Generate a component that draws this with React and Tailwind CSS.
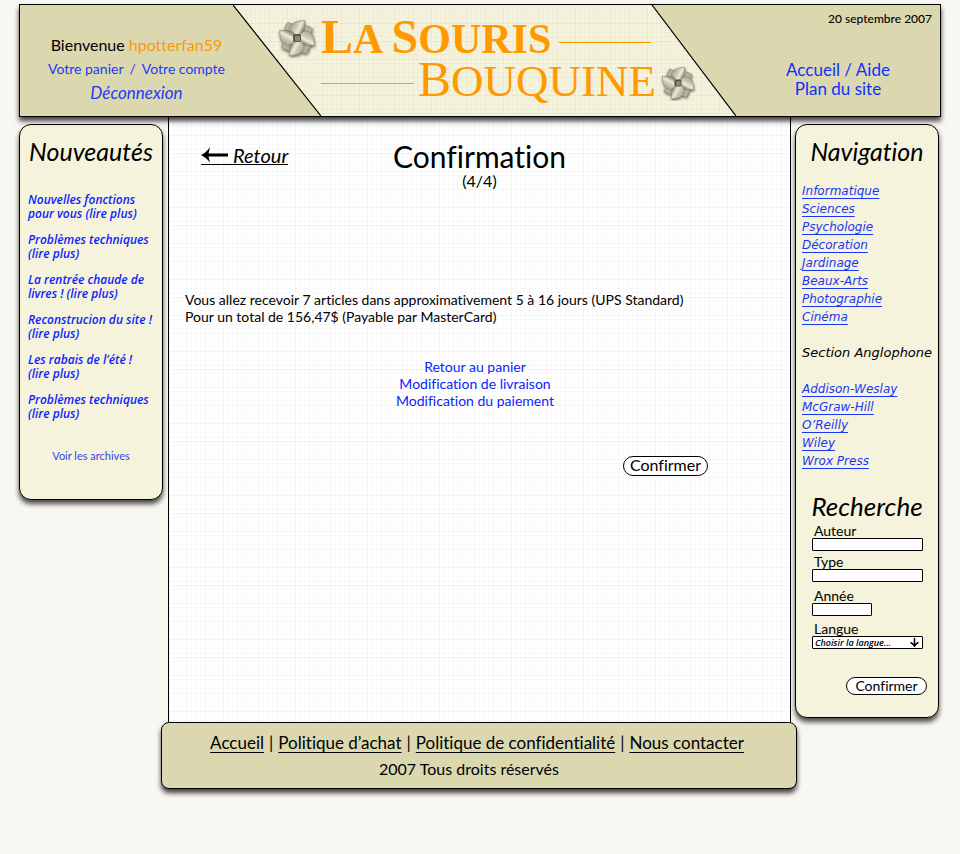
import React from "react";

const newsItems = [
  ["Nouvelles fonctions", "pour vous (lire plus)"],
  ["Problèmes techniques", "(lire plus)"],
  ["La rentrée chaude de", "livres ! (lire plus)"],
  ["Reconstrucion du site !", "(lire plus)"],
  ["Les rabais de l’été !", "(lire plus)"],
  ["Problèmes techniques", "(lire plus)"],
];

const subjects = [
  "Informatique",
  "Sciences",
  "Psychologie",
  "Décoration",
  "Jardinage",
  "Beaux-Arts",
  "Photographie",
  "Cinéma",
];

const publishers = ["Addison-Weslay", "McGraw-Hill", "O’Reilly", "Wiley", "Wrox Press"];

const footerLinks = ["Accueil", "Politique d’achat", "Politique de confidentialité", "Nous contacter"];

const graphPaper =
  "bg-[linear-gradient(rgba(0,0,0,0.04)_0_1px,transparent_1px_4px,rgba(0,0,0,0.02)_4px_5px,transparent_5px_9px,rgba(0,0,0,0.02)_9px_10px,transparent_10px_13px,rgba(0,0,0,0.02)_13px_14px,transparent_14px),linear-gradient(90deg,rgba(0,0,0,0.03)_0_1px,transparent_1px_4px,rgba(0,0,0,0.02)_4px_5px,transparent_5px_9px,rgba(0,0,0,0.02)_9px_10px,transparent_10px_13px,rgba(0,0,0,0.02)_13px_14px,transparent_14px)] bg-[size:18px_18px]";

const panel =
  "w-36 flex-none rounded-xl border border-black bg-[#f5f3dc] shadow-[0_4px_5px_rgba(0,0,0,0.7)]";

const field = "block h-[13px] rounded-[1px] border border-black bg-white px-1 text-[9px] outline-none";

function Flower({ className, id }) {
  const angles = [0, 90, 180, 270];
  return (
    <svg viewBox="-20 -20 40 40" className={className} aria-hidden="true">
      <defs>
        <linearGradient id={id} x1="0" y1="0" x2="1" y2="0.4">
          <stop offset="0" stopColor="#96947f" />
          <stop offset="0.5" stopColor="#c9c7b4" />
          <stop offset="0.75" stopColor="#eceadb" />
          <stop offset="1" stopColor="#8b8977" />
        </linearGradient>
        <filter id={id + "s"} x="-30%" y="-30%" width="160%" height="160%">
          <feDropShadow dx="0.5" dy="1.5" stdDeviation="1.4" floodColor="#000" floodOpacity="0.6" />
        </filter>
      </defs>
      <g filter={"url(#" + id + "s)"}>
        {angles.map((a) => (
          <path
            key={"b" + a}
            transform={"rotate(" + (a - 36) + ")"}
            d="M-6 -3C-10 -8 -8 -15 2 -18C3 -14 9 -11 6 -3Z"
            fill="#b4b29f"
            stroke="#84826f"
            strokeWidth="0.6"
          />
        ))}
        {angles.map((a) => (
          <path
            key={"f" + a}
            transform={"rotate(" + (a + 6) + ")"}
            d="M-4 -3C-12 -8 -8 -17 6 -18C4 -14 10 -9 4 -3Z"
            fill={"url(#" + id + ")"}
            stroke="#84826f"
            strokeWidth="0.6"
          />
        ))}
        <rect x="-4" y="-4" width="8" height="8" rx="2" fill="#57564a" />
        <rect x="-2" y="-2" width="5" height="5" rx="1" fill="#8d8b76" />
      </g>
    </svg>
  );
}

function Header() {
  return (
    <header className="relative z-10 mx-[19px] flex h-[113px] border border-black bg-[#dbd8b0] shadow-[0_4px_5px_rgba(0,0,0,0.75)]">
      <div className="flex flex-1 flex-col items-center pt-7 pl-5 whitespace-nowrap text-[#1f39f5]">
        <p className="text-[16px] leading-6 text-black">
          Bienvenue <span className="text-[#ff9900]">hpotterfan59</span>
        </p>
        <p className="text-[14px] leading-6">
          <a href="#panier">Votre panier</a>
          <span className="mx-[6px]">/</span>
          <a href="#compte">Votre compte</a>
        </p>
        <a href="#deconnexion" className="text-[17px] leading-6 italic">
          Déconnexion
        </a>
      </div>

      <div className="relative w-[503px] flex-none">
        <div className="absolute inset-0 bg-[#f5f3dc] [clip-path:polygon(0_0,419px_0,503px_100%,88px_100%)]">
          <div className={"h-full " + graphPaper} />
        </div>
        <svg
          className="absolute inset-0 h-full w-full"
          viewBox="0 0 503 111"
          preserveAspectRatio="none"
          aria-hidden="true"
        >
          <path d="M0 0L88 111M419 0L503 111" stroke="#000" strokeWidth="1.2" fill="none" />
        </svg>
        <h1 className="relative pt-[11px] font-['Liberation_Serif',serif] whitespace-nowrap text-[#ff9900]">
          <span className="flex h-[43px] items-center pr-[85px] pl-11">
            <Flower id="petalA" className="mr-1 h-10 w-10 flex-none" />
            <span className="text-[42px] leading-[43px] font-bold">
              <span className="text-[48px]">L</span>A <span className="text-[48px]">S</span>OURIS
            </span>
            <span className="mt-[10px] ml-2 h-px flex-1 bg-[#ff9900]" />
          </span>
          <span className="flex h-[43px] items-center pr-10 pl-[88px]">
            <span className="mt-[6px] mr-1 h-px flex-1 bg-[#ff9900]" />
            <span className="text-[45px] leading-[43px]">
              <span className="text-[50px]">B</span>OUQUINE
            </span>
            <Flower id="petalB" className="mt-1 ml-1 h-9 w-9 flex-none" />
          </span>
        </h1>
      </div>

      <div className="flex w-[204px] flex-none flex-col">
        <time dateTime="2007-09-20" className="pt-1 pr-2 text-right text-[12px] leading-5 font-medium">
          20 septembre 2007
        </time>
        <div className="pt-[31px] text-center text-[17px] leading-[19px] text-[#1030fa]">
          <p>
            <a href="#accueil">Accueil</a> / <a href="#aide">Aide</a>
          </p>
          <a href="#plan">Plan du site</a>
        </div>
      </div>
    </header>
  );
}

function News() {
  return (
    <aside className={panel + " mt-[7px] pb-9"}>
      <h2 className="pt-[10px] text-center text-[25px] leading-8 italic">Nouveautés</h2>
      <ul className="mt-[26px] space-y-3 pl-2 font-['Open_Sans',sans-serif] text-[12px] leading-[14px] font-semibold whitespace-nowrap text-[#0b24fb] italic">
        {newsItems.map(([first, second], i) => (
          <li key={i}>
            <a href="#nouveaute">
              {first}
              <br />
              {second}
            </a>
          </li>
        ))}
      </ul>
      <a href="#archives" className="mt-7 block text-center text-[11px] leading-[14px] text-[#2f45ee]">
        Voir les archives
      </a>
    </aside>
  );
}

function LinkList({ items }) {
  return (
    <ul className="text-[#1a36f5]">
      {items.map((item) => (
        <li key={item}>
          <a href="#rayon" className="underline decoration-1 underline-offset-3 [text-decoration-skip-ink:none]">
            {item}
          </a>
        </li>
      ))}
    </ul>
  );
}

function Sidebar() {
  return (
    <aside className={panel + " mt-[7px] pb-[22px]"}>
      <h2 className="pt-[10px] text-center text-[25px] leading-8 italic">Navigation</h2>
      <nav className="mt-[15px] pl-[6px] font-['DejaVu_Sans',sans-serif] text-[12px] leading-[18px] whitespace-nowrap italic">
        <LinkList items={subjects} />
        <p className="py-[18px] text-[13px]">Section Anglophone</p>
        <LinkList items={publishers} />
      </nav>
      <h2 className="mt-5 text-center text-[26px] leading-8 italic">Recherche</h2>
      <form className="pl-4 text-[14px]" onSubmit={(e) => e.preventDefault()}>
        <label htmlFor="auteur" className="mt-[2px] block h-[14px] pl-[2px] leading-[14px]">
          Auteur
        </label>
        <input id="auteur" type="text" className={field + " w-[111px]"} />
        <label htmlFor="type" className="mt-1 block h-[14px] pl-[2px] leading-[14px]">
          Type
        </label>
        <input id="type" type="text" className={field + " w-[111px]"} />
        <label htmlFor="annee" className="mt-[7px] block h-[14px] pl-[2px] leading-[14px]">
          Année
        </label>
        <input id="annee" type="text" className={field + " w-[60px]"} />
        <label htmlFor="langue" className="mt-[6px] block h-[14px] pl-[2px] leading-[14px]">
          Langue
        </label>
        <div className="relative w-[111px]">
          <select
            id="langue"
            className="block h-[13px] w-full appearance-none rounded-[1px] border border-black bg-white pl-[2px] font-['Open_Sans',sans-serif] text-[9px] leading-[11px] font-semibold italic outline-none"
          >
            <option>Choisir la langue...</option>
          </select>
          <svg
            className="pointer-events-none absolute top-[2px] right-1 h-[9px] w-[9px]"
            viewBox="0 0 9 9"
            aria-hidden="true"
          >
            <path d="M4.5 0V8M0.5 4.5Q3 5.5 4.5 8Q6 5.5 8.5 4.5" stroke="#000" strokeWidth="1.5" fill="none" />
          </svg>
        </div>
        <button
          type="submit"
          className="mt-7 mr-[11px] ml-auto block h-[18px] w-[81px] rounded-full border border-black bg-white text-[14px] leading-4"
        >
          Confirmer
        </button>
      </form>
    </aside>
  );
}

function Footer() {
  return (
    <footer className="-mr-[6px] -ml-[7px] rounded-lg border border-black bg-[#dbd8b0] pt-[7px] pb-[6px] text-center text-[16px] leading-[26px] whitespace-nowrap shadow-[0_4px_5px_rgba(0,0,0,0.75)]">
      <nav className="pr-1 text-[17px]">
        {footerLinks.map((label, i) => (
          <React.Fragment key={label}>
            {i > 0 && <span className="mx-[5px]">|</span>}
            <a href="#pied" className="underline decoration-1 underline-offset-3 [text-decoration-skip-ink:none]">
              {label}
            </a>
          </React.Fragment>
        ))}
      </nav>
      <p className="pr-5">2007 Tous droits réservés</p>
    </footer>
  );
}

function Confirmation() {
  return (
    <main className={"h-[605px] border-x border-black bg-white " + graphPaper}>
      <div className="grid grid-cols-[1fr_auto_1fr] pt-[23px]">
        <a
          href="#retour"
          className="mt-[5px] ml-8 flex h-5 items-center self-start justify-self-start border-b border-black text-[20px] leading-5 italic"
        >
          <svg viewBox="0 0 28 16" className="mr-1 h-4 w-7" aria-hidden="true">
            <path d="M0 8Q6 5 9 0L7.500 6.500H27V9.500H7.500L9 16Q6 11 0 8Z" fill="#000" />
          </svg>
          <span>Retour</span>
        </a>
        <div className="text-center">
          <h2 className="text-[30px] leading-8">Confirmation</h2>
          <p className="text-[16px] leading-[18px]">(4/4)</p>
        </div>
      </div>
      <p className="mt-[101px] pl-4 text-[14px] leading-[17px]">
        Vous allez recevoir 7 articles dans approximativement 5 à 16 jours (UPS Standard)
        <br />
        Pour un total de 156,47$ (Payable par MasterCard)
      </p>
      <ul className="mt-[33px] pr-[9px] text-center text-[14px] leading-[17px] text-[#0b24fb]">
        <li>
          <a href="#panier">Retour au panier</a>
        </li>
        <li>
          <a href="#livraison">Modification de livraison</a>
        </li>
        <li>
          <a href="#paiement">Modification du paiement</a>
        </li>
      </ul>
      <button
        type="button"
        className="mt-[47px] mr-[82px] ml-auto block h-5 w-[85px] rounded-full border border-black bg-white pb-[2px] text-[16px] leading-4"
      >
        Confirmer
      </button>
    </main>
  );
}

export default function App() {
  return (
    <div className="min-h-screen bg-[#f8f7f2] pt-1 font-['Lato',sans-serif] text-black [font-variant-ligatures:none]">
      <Header />
      <div className="mr-[21px] ml-[19px] flex items-start">
        <News />
        <div className="mr-1 ml-[5px] min-w-0 flex-1">
          <Confirmation />
          <Footer />
        </div>
        <Sidebar />
      </div>
    </div>
  );
}
